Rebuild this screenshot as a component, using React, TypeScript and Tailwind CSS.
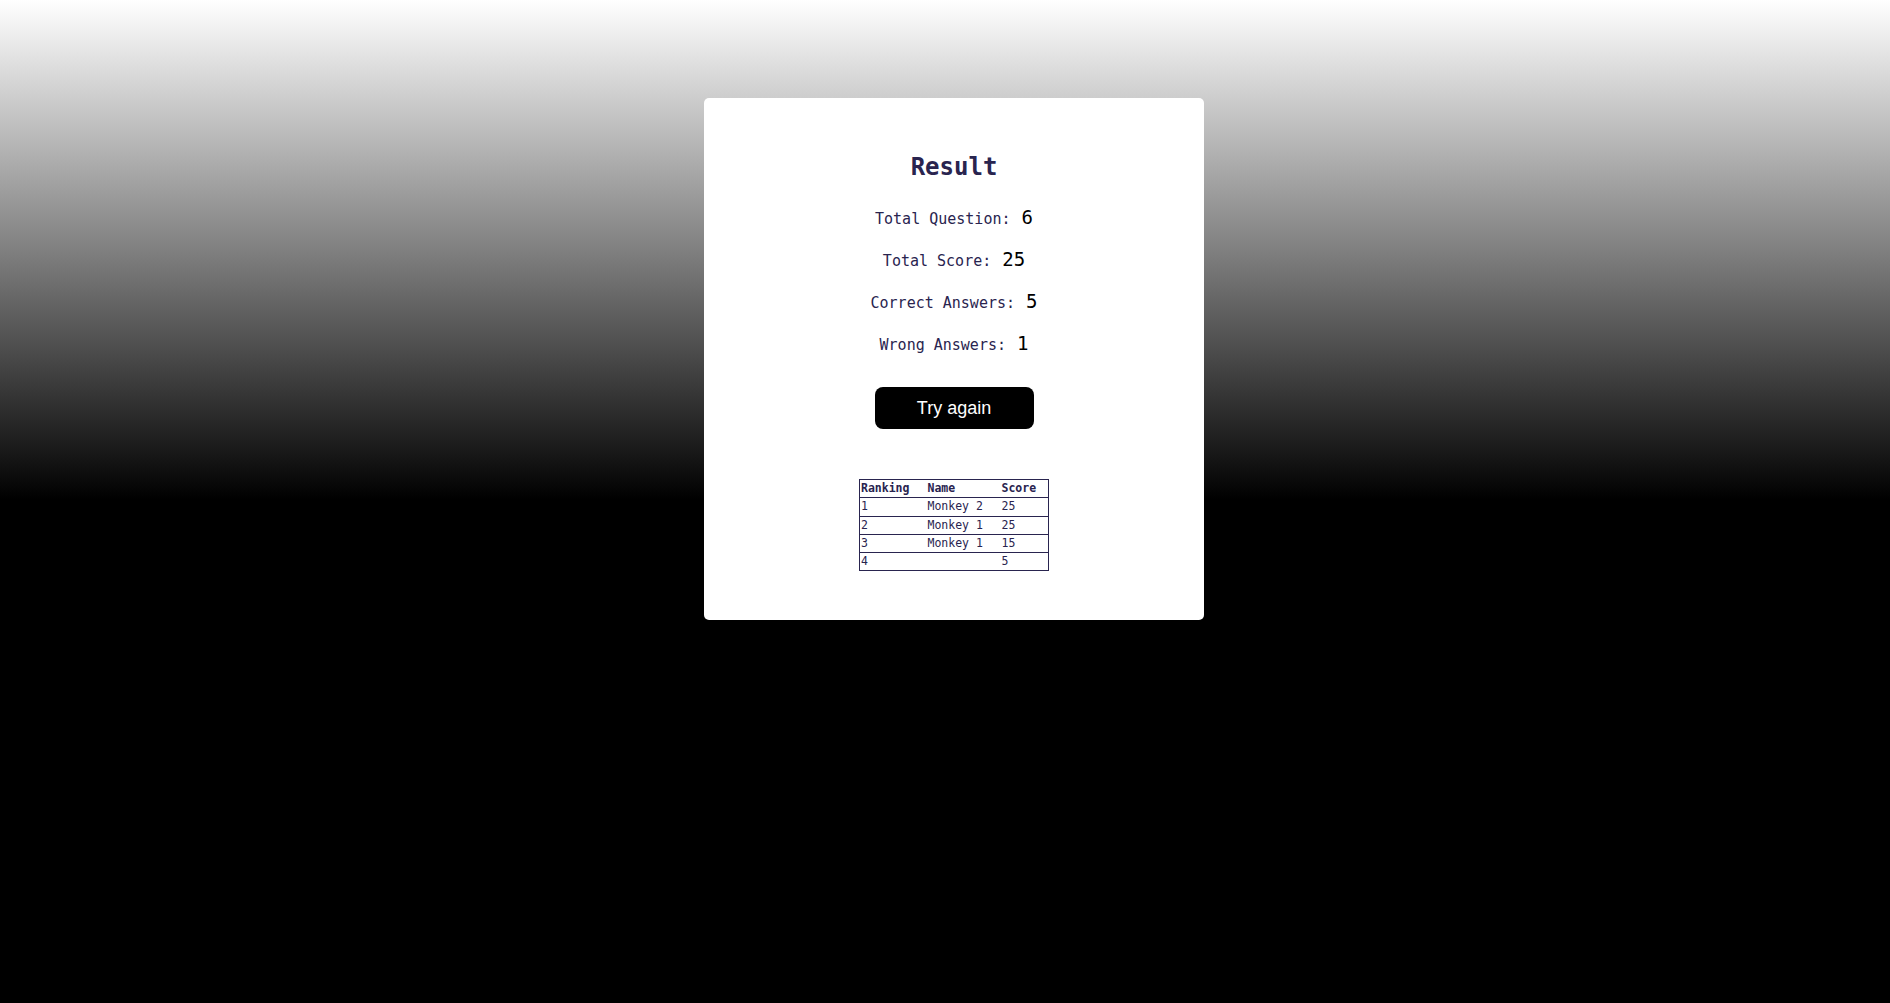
const stats = [
  { label: 'Total Question:', value: 6 },
  { label: 'Total Score:', value: 25 },
  { label: 'Correct Answers:', value: 5 },
  { label: 'Wrong Answers:', value: 1 },
]

const ranking = [
  { rank: 1, name: 'Monkey 2', score: 25 },
  { rank: 2, name: 'Monkey 1', score: 25 },
  { rank: 3, name: 'Monkey 1', score: 15 },
  { rank: 4, name: '', score: 5 },
]

export default function App() {
  return (
    <div className="min-h-screen bg-black bg-[linear-gradient(to_bottom,#ffffff,#000000_500px)] bg-no-repeat pt-[98px] pl-[18px] font-['DejaVu_Sans_Mono',monospace]">
      <div className="mx-auto flex w-[500px] flex-col items-center rounded-[5px] bg-white pt-[53px] pb-[49px]">
        <h1 className="h-8 text-[24px] leading-8 font-bold text-[#29244f]">Result</h1>
        <div className="mt-[13px] flex flex-col items-center">
          {stats.map((s) => (
            <div key={s.label} className="flex h-[42px] items-center">
              <p className="flex items-baseline">
                <span className="text-[15px] text-[#29244f]">{s.label}</span>
                <span className="ml-[11px] text-[19px] text-black">{s.value}</span>
              </p>
            </div>
          ))}
        </div>
        <button className="mt-[23px] h-[42px] w-[159px] rounded-lg bg-black font-['Liberation_Sans',Arial,sans-serif] text-lg text-white">
          Try again
        </button>
        <table className="mt-[50px] w-[190px] border-collapse border border-[#29244f] text-left text-[11.5px] text-[#29244f]">
          <thead>
            <tr className="h-[18px]">
              <th className="w-[67px] border-b border-[#29244f] pl-[1px] font-bold">Ranking</th>
              <th className="w-[74px] border-b border-[#29244f] pl-[1px] font-bold">Name</th>
              <th className="border-b border-[#29244f] pl-[1px] font-bold">Score</th>
            </tr>
          </thead>
          <tbody>
            {ranking.map((r) => (
              <tr key={r.rank} className="h-[18px] border-b border-[#29244f]">
                <td className="pl-[1px]">{r.rank}</td>
                <td className="pl-[1px]">{r.name}</td>
                <td className="pl-[1px]">{r.score}</td>
              </tr>
            ))}
          </tbody>
        </table>
      </div>
    </div>
  )
}
